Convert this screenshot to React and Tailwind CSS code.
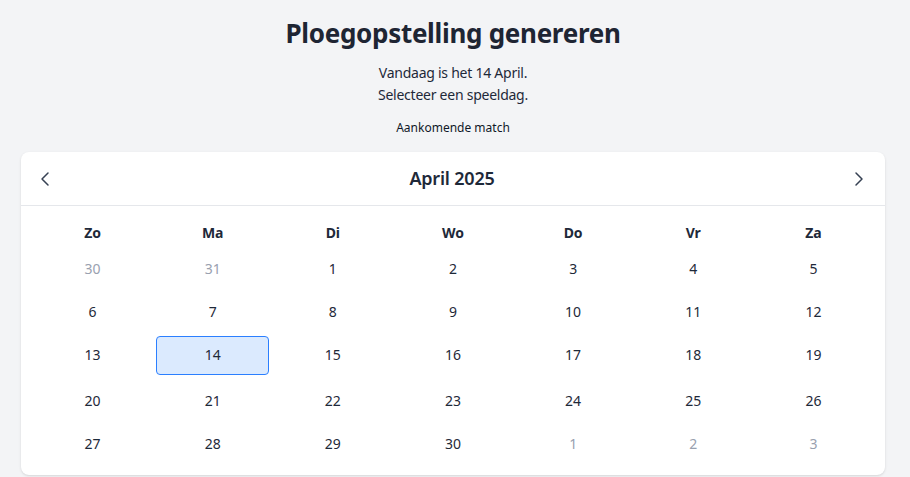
import React from 'react'
import { ChevronLeft, ChevronRight } from 'lucide-react'

const days = ['Zo', 'Ma', 'Di', 'Wo', 'Do', 'Vr', 'Za']

const weeks = [
  [[30, true], [31, true], [1], [2], [3], [4], [5]],
  [[6], [7], [8], [9], [10], [11], [12]],
  [[13], [14], [15], [16], [17], [18], [19]],
  [[20], [21], [22], [23], [24], [25], [26]],
  [[27], [28], [29], [30], [1, true], [2, true], [3, true]],
]

export default function App() {
  return (
    <div className="min-h-screen bg-gray-100 font-['Noto_Sans',sans-serif] text-gray-800">
      <div className="w-[906px]">
        {/* Heading */}
        <div className="flex flex-col items-center pt-[15px]">
          <h1 className="text-[26px] leading-[36px] font-bold tracking-[-0.3px] text-[#1e2533]">
            Ploegopstelling genereren
          </h1>
          <div className="mt-[11px] text-center text-[14px] leading-[22px] tracking-[-0.25px] text-gray-800">
            <p>Vandaag is het 14 April.</p>
            <p>Selecteer een speeldag.</p>
          </div>
          <p className="mt-3 text-[12px] leading-5 text-gray-900">Aankomende match</p>
        </div>

        {/* Calendar */}
        <div className="px-[21px] pt-[14px] pb-1">
          <div className="bg-white rounded-lg shadow-sm">
            <div className="h-[54px] flex items-center justify-between pl-3 pr-[14px] border-b border-gray-200">
              <button className="text-gray-700">
                <ChevronLeft size={24} strokeWidth={1.5} />
              </button>
              <h2 className="text-[18px] font-semibold tracking-[-0.2px] text-gray-800">April 2025</h2>
              <button className="text-gray-700">
                <ChevronRight size={24} strokeWidth={1.5} />
              </button>
            </div>

            <div className="px-[15px] pt-[15px] pb-[14px]">
              <div className="grid grid-cols-7 gap-x-[7px] mb-[7px]">
                {days.map((d) => (
                  <div key={d} className="h-[22px] flex items-center justify-center text-[14px] font-bold text-gray-800">
                    {d}
                  </div>
                ))}
              </div>
              <div className="grid grid-cols-7 gap-[7px] items-start">
                {weeks.flat().map(([n, muted], i) => {
                  const selected = n === 14 && !muted
                  return (
                    <div
                      key={i}
                      className={
                        selected
                          ? 'h-[39px] pb-[2px] flex items-center justify-center text-[14px] rounded border border-blue-500 bg-blue-100 text-gray-800'
                          : muted
                          ? 'h-[36px] flex items-center justify-center text-[14px] text-gray-400'
                          : 'h-[36px] flex items-center justify-center text-[14px] text-gray-800'
                      }
                    >
                      {n}
                    </div>
                  )
                })}
              </div>
            </div>
          </div>
        </div>
      </div>
    </div>
  )
}
